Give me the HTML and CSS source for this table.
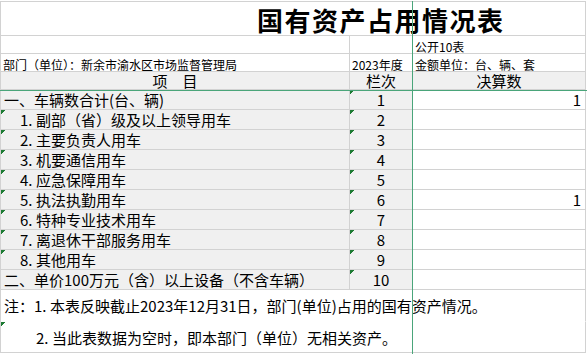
FILE: index.html
```html
<!DOCTYPE html>
<html lang="zh-CN">
<head>
<meta charset="utf-8">
<title>国有资产占用情况表</title>
<link rel="stylesheet" href="styles.css">
</head>
<body>
<div class="viewport">
  <div class="sheet">
    <div class="cell title span-all">国有资产占用情况表</div>

    <div class="cell small bottom"></div>
    <div class="cell small bottom"></div>
    <div class="cell small bottom">公开10表</div>

    <div class="cell small bottom">部门（单位）：新余市渝水区市场监督管理局</div>
    <div class="cell small bottom year">2023年度</div>
    <div class="cell small bottom">金额单位：台、辆、套</div>

    <div class="cell head">项　目</div>
    <div class="cell head">栏次</div>
    <div class="cell head">决算数</div>

    <div class="cell item">一、车辆数合计(台、辆)</div>
    <div class="cell no flag">1</div>
    <div class="cell val">1</div>

    <div class="cell item sub flag"><span class="num">1.</span>副部（省）级及以上领导用车</div>
    <div class="cell no flag">2</div>
    <div class="cell val"></div>

    <div class="cell item sub flag"><span class="num">2.</span>主要负责人用车</div>
    <div class="cell no flag">3</div>
    <div class="cell val"></div>

    <div class="cell item sub flag"><span class="num">3.</span>机要通信用车</div>
    <div class="cell no flag">4</div>
    <div class="cell val"></div>

    <div class="cell item sub flag"><span class="num">4.</span>应急保障用车</div>
    <div class="cell no flag">5</div>
    <div class="cell val"></div>

    <div class="cell item sub flag"><span class="num">5.</span>执法执勤用车</div>
    <div class="cell no flag">6</div>
    <div class="cell val">1</div>

    <div class="cell item sub flag"><span class="num">6.</span>特种专业技术用车</div>
    <div class="cell no flag">7</div>
    <div class="cell val"></div>

    <div class="cell item sub flag"><span class="num">7.</span>离退休干部服务用车</div>
    <div class="cell no flag">8</div>
    <div class="cell val"></div>

    <div class="cell item sub flag"><span class="num">8.</span>其他用车</div>
    <div class="cell no flag">9</div>
    <div class="cell val"></div>

    <div class="cell item">二、单价100万元（含）以上设备（不含车辆）</div>
    <div class="cell no flag">10</div>
    <div class="cell val"></div>

    <div class="cell note span-all no-bottom">注：<span class="num">1.</span>本表反映截止2023年12月31日，部门(单位)占用的国有资产情况。</div>
    <div class="cell note note2 span-all flag"><span class="num">2.</span>当此表数据为空时，即本部门（单位）无相关资产。</div>
  </div>
  <div class="freeze-v"></div>
  <div class="freeze-h"></div>
</div>
</body>
</html>
```

FILE: styles.css
```css
html, body {
  margin: 0;
  padding: 0;
  background: #ffffff;
}

body {
  font-family: "Noto Sans CJK SC", "Noto Sans", sans-serif;
  color: #000;
  width: 587px;
  height: 354px;
  overflow: hidden;
}

.viewport {
  position: relative;
  width: 587px;
  height: 354px;
}

.sheet {
  margin-top: 1px;
  display: grid;
  grid-template-columns: 349px 63px 173px;
  grid-template-rows: 34px 18px 18px 18px repeat(10, 20px) 32px 31px;
  width: 586px;
  border-left: 1px solid #d2d2d2;
  border-top: 1px solid #d2d2d2;
  box-sizing: border-box;
}

.cell {
  box-sizing: border-box;
  border-right: 1px solid #d2d2d2;
  border-bottom: 1px solid #d2d2d2;
  display: flex;
  align-items: center;
  white-space: nowrap;
  font-size: 15px;
  line-height: 15px;
  background-repeat: no-repeat;
  background-size: 5px 5px;
  background-position: 0 0;
}

.num {
  display: inline-block;
  width: 16px;
}

.span-all {
  grid-column: 1 / -1;
}

.title {
  align-items: center;
  padding-left: 256px;
  padding-top: 3px;
  font-size: 26px;
  line-height: 28px;
  font-weight: 700;
  letter-spacing: 1.5px;
}

.small {
  font-size: 12px;
  line-height: 13px;
  padding-left: 2px;
}

.bottom {
  align-items: flex-end;
  padding-bottom: 0;
}

.year {
  padding-left: 2px;
}

.head {
  background-color: #f0f0f0;
  justify-content: center;
  font-size: 15px;
  line-height: 14px;
  padding-top: 1px;
}

.item {
  background-color: #f0f0f0;
  padding-left: 3px;
}

.item.sub {
  padding-left: 19px;
}

.no {
  background-color: #f0f0f0;
  justify-content: center;
}

.val {
  justify-content: flex-end;
  padding-right: 4px;
}

.flag {
  background-image: linear-gradient(135deg, #1e7b34 0 3px, transparent 3px);
}

.note {
  padding-left: 3px;
}

.note2 {
  padding-left: 35px;
}

.no-bottom {
  border-bottom-color: transparent;
}

.freeze-v {
  position: absolute;
  left: 412px;
  top: 0;
  width: 1px;
  height: 354px;
  background: #4aa57a;
}

.freeze-h {
  position: absolute;
  left: 0;
  top: 89px;
  width: 587px;
  height: 1px;
  background: #4aa57a;
}
```
